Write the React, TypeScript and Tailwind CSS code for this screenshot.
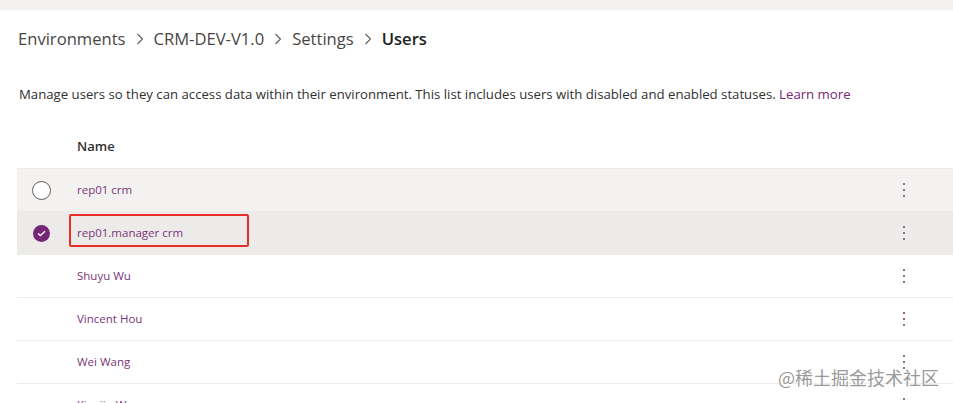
import React from 'react';

const users = [
  { name: 'rep01 crm', state: 'hover' },
  { name: 'rep01.manager crm', state: 'selected' },
  { name: 'Shuyu Wu', state: 'normal' },
  { name: 'Vincent Hou', state: 'normal' },
  { name: 'Wei Wang', state: 'normal' },
  { name: 'Xiaojin Wang', state: 'normal' },
];

function Chevron() {
  return (
    <svg width="10" height="14" viewBox="0 0 10 14" className="mx-[9px] text-[#605e5c]">
      <path d="M2.5 2 L7.5 7 L2.5 12" fill="none" stroke="currentColor" strokeWidth="1.1" />
    </svg>
  );
}

function MoreDots() {
  return (
    <div className="flex flex-col gap-[4px] items-center">
      <span className="w-[2px] h-[2px] bg-[#8f6b8f]" />
      <span className="w-[2px] h-[2px] bg-[#8f6b8f]" />
      <span className="w-[2px] h-[2px] bg-[#8f6b8f]" />
    </div>
  );
}

export default function App() {
  return (
    <div
      className="w-[953px] h-[403px] overflow-hidden bg-white relative"
      style={{ fontFamily: '"Open Sans", "Noto Sans", sans-serif' }}
    >
      {/* top bar */}
      <div className="h-[10px] bg-[#f3f2f1]" />

      {/* breadcrumb */}
      <div className="flex items-center pl-[18px] pt-[14px] h-[44px] text-[16.6px] text-[#484644] leading-none">
        <span>Environments</span>
        <Chevron />
        <span>CRM-DEV-V1.0</span>
        <Chevron />
        <span>Settings</span>
        <Chevron />
        <span className="font-semibold text-[#201f1e]">Users</span>
      </div>

      {/* description */}
      <p className="pl-[19px] mt-[31px] text-[13.2px] text-[#323130] leading-[18px]">
        Manage users so they can access data within their environment. This list includes users with disabled and enabled statuses.{' '}
        <span className="text-[#742774]">Learn more</span>
      </p>

      {/* table */}
      <div className="ml-[17px] mt-[22px]">
        <div className="h-[44px] flex items-center pl-[60px] border-b border-[#edebe9] text-[13px] font-semibold text-[#323130]">
          Name
        </div>
        {users.map((u) => (
          <div
            key={u.name}
            className={`h-[43px] flex items-center border-b border-[#edebe9] ${
              u.state === 'hover' ? 'bg-[#f3f2f1]' : u.state === 'selected' ? 'bg-[#edebe9]' : 'bg-white'
            }`}
          >
            <div className="w-[48px] flex justify-center pl-[1px]">
              {u.state === 'hover' && (
                <span className="w-[19px] h-[19px] rounded-full border border-[#605e5c] bg-white" />
              )}
              {u.state === 'selected' && (
                <span className="w-[17px] h-[17px] rounded-full bg-[#742774] flex items-center justify-center">
                  <svg width="9" height="7" viewBox="0 0 9 7">
                    <path d="M1 3.5 L3.4 5.6 L8 1.2" fill="none" stroke="white" strokeWidth="1.4" />
                  </svg>
                </span>
              )}
            </div>
            <div className="flex-1 pl-[12px] relative h-full flex items-center">
              <span className="text-[11.5px] text-[#7a3579]">{u.name}</span>
              {u.state === 'selected' && (
                <span className="absolute left-[4px] top-[2px] w-[180px] h-[33px] border-2 border-[#e8302a] rounded-[2px]" />
              )}
            </div>
            <div className="w-[100px] flex justify-center pl-[2px]">
              <MoreDots />
            </div>
          </div>
        ))}
      </div>

      {/* watermark */}
      <div
        className="absolute left-[778px] top-[368px] text-[18px] text-[#9a9a9a] leading-none whitespace-nowrap"
        style={{ fontFamily: '"Noto Sans CJK SC", sans-serif', textShadow: '0 0 2px #fff, 0 0 2px #fff' }}
      >
        @稀土掘金技术社区
      </div>
    </div>
  );
}
